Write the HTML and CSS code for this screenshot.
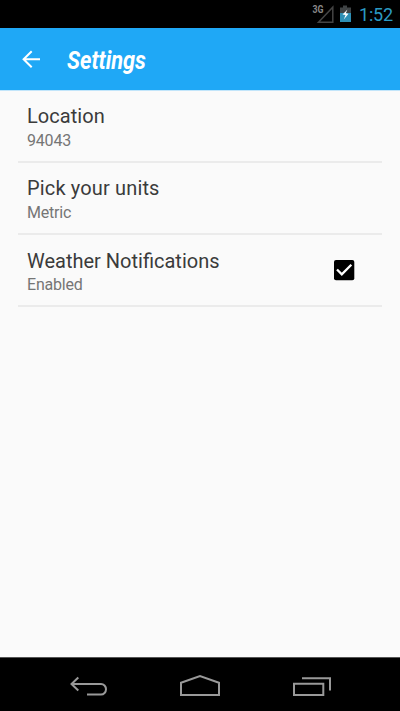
FILE: index.html
```
<!DOCTYPE html>
<html lang="en">
<head>
<meta charset="utf-8">
<title>Settings</title>
<link rel="stylesheet" href="styles.css">
</head>
<body>
<div class="screen">
  <div class="status">
    <svg class="status-icons" width="44" height="28" viewBox="0 0 44 28">
      <text class="network" x="0.5" y="13" textLength="11" lengthAdjust="spacingAndGlyphs">3G</text>
      <path d="M6.500 22.300L20.800 7.200V22.300Z" fill="none" stroke="#444" stroke-width="1.5"/>
      <path d="M31 5.500h4v2h4V13H28V7.500h3Z" fill="#3f4345"/>
      <path d="M28 13h11v9H28Z" fill="#2d8fb5"/>
      <path d="M35.500 9.500L30.500 14.500L33.500 15L31.800 19.500L36.500 13.800L33.800 13.300Z" fill="#fff"/>
    </svg>
    <span class="clock">1:52</span>
  </div>
  <header class="bar">
    <svg class="arrow" width="20" height="20" viewBox="0 0 20 20">
      <path d="M19 9.300H2.500M10.700 1.300L2.600 9.300L10.700 17.300" fill="none" stroke="#fff" stroke-width="2"/>
    </svg>
    <h1 class="title">Settings</h1>
  </header>
  <main class="list">
    <div class="row">
      <div><div class="name location">Location</div><div class="value">94043</div></div>
    </div>
    <div class="row">
      <div><div class="name units">Pick your units</div><div class="value">Metric</div></div>
    </div>
    <div class="row">
      <div><div class="name notifications">Weather Notifications</div><div class="value">Enabled</div></div>
      <svg class="check" width="22" height="22" viewBox="0 0 22 22">
        <rect x="1" y="1" width="20.300" height="20.300" rx="2" fill="#000"/>
        <path d="M4 10.500L8.800 15.300L18.300 5.700" fill="none" stroke="#fff" stroke-width="2.300"/>
      </svg>
    </div>
  </main>
  <nav class="nav">
    <svg width="40" height="24" viewBox="0 0 40 24">
      <path d="M3.500 10H33A5 5.300 0 0 1 33 20.600H19M10.300 3.500L3.500 10L10.300 16.500" fill="none" stroke="#999" stroke-width="2"/>
    </svg>
    <svg width="42" height="24" viewBox="0 0 42 24">
      <path d="M2 8.700L21 2L40 8.700V21H2Z" fill="none" stroke="#999" stroke-width="2"/>
    </svg>
    <svg width="40" height="24" viewBox="0 0 40 24">
      <path d="M3 9.800H32.300V21H3ZM11 4.300H39V16.500" fill="none" stroke="#999" stroke-width="2"/>
    </svg>
  </nav>
</div>
</body>
</html>
```
FILE: styles.css
```
* { box-sizing: border-box; }
body { margin: 0; font-family: Roboto, sans-serif; }
.screen { width: 400px; height: 711px; display: flex; flex-direction: column; background: #fafafa; }
.status { height: 28px; background: #000; display: flex; justify-content: flex-end; padding-right: 7px; }
.status-icons { margin-right: 4px; }
.network { font: bold 10px Roboto, sans-serif; fill: #888; }
.clock { width: 34px; margin-left: -1px; color: #33b5e5; font-size: 18px; line-height: 30px; letter-spacing: -.2px; opacity: .85; white-space: nowrap; }
.bar { height: 62px; background: #1fa8f6; display: flex; align-items: center; padding-left: 21px; }
.arrow { margin-top: 1px; }
.title { margin: 3px 0 0 26px; color: #fff; font-size: 25px; line-height: 30px; font-weight: 700; font-style: italic; transform: scaleX(.87); transform-origin: left; }
.list { flex: 1; padding: 0 18px; border-top: 1px solid #c2e5fa; }
.row { height: 72px; padding: 12px 27px 0 9px; display: flex; justify-content: space-between; border-bottom: 2px solid #ebebeb; }
.name { color: #3b3b3b; font-size: 20px; line-height: 27px; white-space: nowrap; }
.location { letter-spacing: .06px; }
.units { letter-spacing: .15px; }
.notifications { padding-top: 1px; line-height: 26px; }
.notifications { line-height: 27px; margin-bottom: -1px; }
.value { color: #757575; font-size: 16px; line-height: 21px; letter-spacing: -.2px; }
.check { margin-top: 12px; }
.nav { height: 54px; background: #000; border-top: 1px solid #555; display: flex; justify-content: space-between; padding: 16px 69px 0 68px; }
```
